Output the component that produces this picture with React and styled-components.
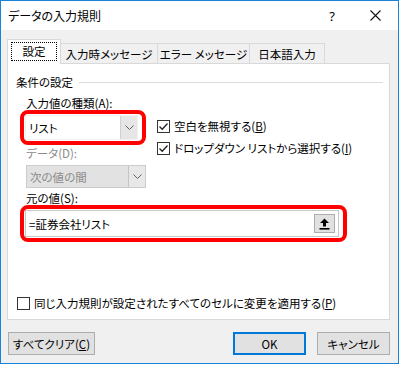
import React from "react";
import styled, { createGlobalStyle } from "styled-components";

const GlobalStyle = createGlobalStyle`
	html, body {
		margin: 0;
		padding: 0;
		background: #fff;
	}
	body {
		font-family: "Noto Sans CJK JP", "Noto Sans", sans-serif;
		font-size: 11.5px;
		color: #000;
		font-feature-settings: "palt";
	}
`;

const CheckMark = () => (
	<svg width="11" height="11" viewBox="0 0 11 11">
		<path d="M1.5 5.5 L4.2 8.2 L9.5 2.5" fill="none" stroke="#222" strokeWidth="1.3" />
	</svg>
);

const Chevron = () => (
	<svg width="9" height="6" viewBox="0 0 9 6">
		<path d="M0.5 0.5 L4.5 4.5 L8.5 0.5" fill="none" stroke="#606060" strokeWidth="1" />
	</svg>
);

const Upload = () => (
	<svg width="11" height="12" viewBox="0 0 11 12">
		<path d="M5.5 0.5 L10 5 L7 5 L7 8.5 L4 8.5 L4 5 L1 5 Z" fill="#000" />
		<rect x="0.5" y="10" width="10" height="1.6" fill="#000" />
	</svg>
);

const CloseX = () => (
	<svg width="11" height="11" viewBox="0 0 11 11">
		<path d="M0.5 0.5 L10.5 10.5 M10.5 0.5 L0.5 10.5" stroke="#111" strokeWidth="1.1" />
	</svg>
);

const App = () => {
	return (
		<>
			<GlobalStyle />
			<StWindow>
				<StTitleBar>
					<StTitle>データの入力規則</StTitle>
					<StHelp>?</StHelp>
					<StClose>
						<CloseX />
					</StClose>
				</StTitleBar>
				<StBody>
					<StTabRow>
						<StTab $w={54} $active>
							<StFocus>設定</StFocus>
						</StTab>
						<StTab $w={98}>入力時メッセージ</StTab>
						<StTab $w={93}>エラー メッセージ</StTab>
						<StTab $w={76}>日本語入力</StTab>
					</StTabRow>
					<StPanel>
						<StGroupHeader>
							<span>条件の設定</span>
							<StRule />
						</StGroupHeader>
						<StSection>
							<StTopRow>
								<StLeftCol>
									<StLabel>入力値の種類(A):</StLabel>
									<StRedFrame $w={126}>
										<StCombo>
											<StComboText>リスト</StComboText>
											<StArrowBox>
												<Chevron />
											</StArrowBox>
										</StCombo>
									</StRedFrame>
									<StLabel $disabled $mt={0}>データ(D):</StLabel>
									<StCombo $disabled>
										<StComboText>次の値の間</StComboText>
										<StArrowBox $disabled>
											<Chevron />
										</StArrowBox>
									</StCombo>
								</StLeftCol>
								<StCheckCol>
									<StCheckRow>
										<StBox>
											<CheckMark />
										</StBox>
										<span>
											空白を無視する(<u>B</u>)
										</span>
									</StCheckRow>
									<StCheckRow>
										<StBox>
											<CheckMark />
										</StBox>
										<span>
											ドロップダウン リストから選択する(<u>I</u>)
										</span>
									</StCheckRow>
								</StCheckCol>
							</StTopRow>
							<StLabel $mt={3}>元の値(S):</StLabel>
							<StRedFrame $w={327}>
								<StSourceInput>
									<span>=証券会社リスト</span>
									<StRefButton>
										<Upload />
									</StRefButton>
								</StSourceInput>
							</StRedFrame>
						</StSection>
						<StBottomCheck>
							<StBox />
							<span>
								同じ入力規則が設定されたすべてのセルに変更を適用する(<u>P</u>)
							</span>
						</StBottomCheck>
					</StPanel>
					<StButtonRow>
						<StButton $w={87}>
							すべてクリア(<u>C</u>)
						</StButton>
						<StSpacer />
						<StButton $w={73} $primary>
							OK
						</StButton>
						<StButton $w={73}>キャンセル</StButton>
					</StButtonRow>
				</StBody>
			</StWindow>
		</>
	);
};

export default App;

const StWindow = styled.div`
	width: 399px;
	height: 364px;
	box-sizing: border-box;
	border: 1px solid #1883d7;
	display: flex;
	flex-direction: column;
	background: #f0f0f0;
`;

const StTitleBar = styled.div`
	height: 29px;
	background: #fff;
	display: flex;
	align-items: center;
	padding-left: 7px;
`;

const StTitle = styled.div`
	font-size: 12px;
	flex: 1;
`;

const StHelp = styled.div`
	width: 20px;
	text-align: center;
	font-family: "Noto Sans", sans-serif;
	font-size: 13px;
	margin-right: 10px;
`;

const StClose = styled.div`
	width: 46px;
	display: flex;
	justify-content: center;
	align-items: center;
`;

const StBody = styled.div`
	flex: 1;
	display: flex;
	flex-direction: column;
	padding: 9px 8px 0 6px;
`;

const StTabRow = styled.div`
	display: flex;
	align-items: flex-end;
	margin-left: 1px;
	position: relative;
	z-index: 1;
	margin-bottom: -1px;
`;

const StTab = styled.div`
	width: ${(p) => p.$w}px;
	height: ${(p) => (p.$active ? 25 : 21)}px;
	box-sizing: border-box;
	display: flex;
	align-items: center;
	justify-content: center;
	background: ${(p) => (p.$active ? "#fff" : "#f0f0f0")};
	border: 1px solid #d9d9d9;
	border-bottom: ${(p) => (p.$active ? "none" : "1px solid #d9d9d9")};
	margin-left: -1px;
	padding-bottom: ${(p) => (p.$active ? 2 : 0)}px;
	white-space: nowrap;
`;

const StFocus = styled.div`
	width: 46px;
	height: 19px;
	box-sizing: border-box;
	border: 1px dotted #000;
	display: flex;
	align-items: center;
	justify-content: center;
`;

const StPanel = styled.div`
	height: 257px;
	box-sizing: border-box;
	background: #fff;
	border: 1px solid #d9d9d9;
	display: flex;
	flex-direction: column;
	padding: 10px 6px 8px 8px;
`;

const StGroupHeader = styled.div`
	display: flex;
	align-items: center;
	line-height: 16px;
	gap: 6px;
`;

const StRule = styled.div`
	flex: 1;
	height: 1px;
	background: #dcdcdc;
`;

const StSection = styled.div`
	display: flex;
	flex-direction: column;
	padding-left: 10px;
	margin-top: 6px;
`;

const StTopRow = styled.div`
	display: flex;
	gap: 11px;
`;

const StLeftCol = styled.div`
	width: 120px;
	display: flex;
	flex-direction: column;
`;

const StLabel = styled.div`
	line-height: 14px;
	height: 14px;
	margin-top: ${(p) => p.$mt || 0}px;
	color: ${(p) => (p.$disabled ? "#8a8a8a" : "#000")};
	white-space: nowrap;
`;

const StRedFrame = styled.div`
	width: ${(p) => p.$w}px;
	box-sizing: border-box;
	border: 4px solid #ff0000;
	border-radius: 8px;
	padding: 1px 4px 1px 1px;
	margin-left: -6px;
	margin-bottom: 1px;
`;

const StCombo = styled.div`
	height: ${(p) => (p.$disabled ? 23 : 25)}px;
	box-sizing: border-box;
	display: flex;
	align-items: stretch;
	background: ${(p) => (p.$disabled ? "#e2e2e2" : "#fff")};
	border: 1px solid ${(p) => (p.$disabled ? "#cccccc" : "#f0f0f0")};
	color: ${(p) => (p.$disabled ? "#8a8a8a" : "#000")};
	margin-top: ${(p) => (p.$disabled ? 5 : 0)}px;
`;

const StComboText = styled.div`
	flex: 1;
	display: flex;
	align-items: center;
	padding-left: 3px;
`;

const StArrowBox = styled.div`
	width: 16px;
	display: flex;
	align-items: center;
	justify-content: center;
	background: ${(p) => (p.$disabled ? "#e8e8e8" : "#e6e6e6")};
	border-left: 1px solid ${(p) => (p.$disabled ? "#c4c4c4" : "#d0d0d0")};
`;

const StCheckCol = styled.div`
	display: flex;
	flex-direction: column;
	gap: 6px;
	padding-top: 22px;
`;

const StCheckRow = styled.div`
	display: flex;
	align-items: center;
	gap: 4px;
	line-height: 16px;
	white-space: nowrap;
`;

const StBox = styled.div`
	width: 13px;
	height: 13px;
	box-sizing: border-box;
	border: 1px solid #333;
	background: #fff;
	display: flex;
	align-items: center;
	justify-content: center;
	flex-shrink: 0;
`;

const StSourceInput = styled.div`
	height: 27px;
	box-sizing: border-box;
	display: flex;
	align-items: center;
	justify-content: space-between;
	border: 1px solid #c8c8c8;
	background: #fff;
	padding: 0 3px 0 3px;
`;

const StRefButton = styled.div`
	width: 21px;
	height: 19px;
	box-sizing: border-box;
	background: #e1e1e1;
	border: 1px solid #adadad;
	display: flex;
	align-items: center;
	justify-content: center;
`;

const StBottomCheck = styled.div`
	margin-top: auto;
	display: flex;
	align-items: center;
	gap: 4px;
	line-height: 16px;
	padding-left: 1px;
	white-space: nowrap;
`;

const StButtonRow = styled.div`
	display: flex;
	gap: 11px;
	margin-top: 12px;
	padding-left: 1px;
`;

const StSpacer = styled.div`
	flex: 1;
`;

const StButton = styled.div`
	width: ${(p) => p.$w}px;
	height: 23px;
	box-sizing: border-box;
	display: flex;
	align-items: center;
	justify-content: center;
	background: #e1e1e1;
	border: 1px solid ${(p) => (p.$primary ? "#0078d7" : "#adadad")};
	box-shadow: ${(p) => (p.$primary ? "inset 0 0 0 1px #0078d7" : "none")};
	white-space: nowrap;
`;
